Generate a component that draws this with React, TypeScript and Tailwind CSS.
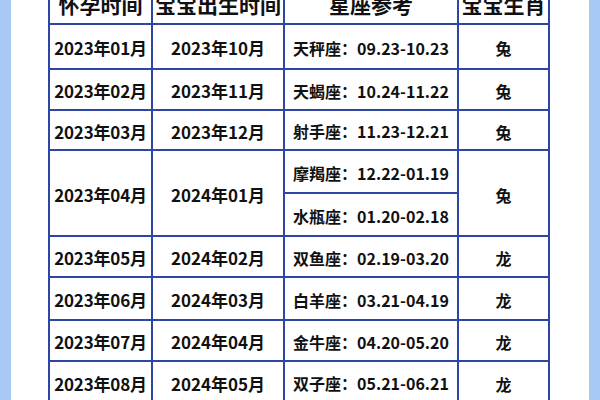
import React from "react";

type Row = { a: string; b: string; signs: string[]; z: string; h: number };

const rows: Row[] = [
  { a: "2023年01月", b: "2023年10月", signs: ["天秤座：09.23-10.23"], z: "兔", h: 45 },
  { a: "2023年02月", b: "2023年11月", signs: ["天蝎座：10.24-11.22"], z: "兔", h: 41 },
  { a: "2023年03月", b: "2023年12月", signs: ["射手座：11.23-12.21"], z: "兔", h: 40 },
  { a: "2023年04月", b: "2024年01月", signs: ["摩羯座：12.22-01.19", "水瓶座：01.20-02.18"], z: "兔", h: 86 },
  { a: "2023年05月", b: "2024年02月", signs: ["双鱼座：02.19-03.20"], z: "龙", h: 41 },
  { a: "2023年06月", b: "2024年03月", signs: ["白羊座：03.21-04.19"], z: "龙", h: 43 },
  { a: "2023年07月", b: "2024年04月", signs: ["金牛座：04.20-05.20"], z: "龙", h: 41 },
  { a: "2023年08月", b: "2024年05月", signs: ["双子座：05.21-06.21"], z: "龙", h: 42 },
];

const cell = "flex items-center justify-center border-r-2 border-b-2 border-[#2d45a3] whitespace-nowrap";

export default function App() {
  return (
    <div
      className="w-[600px] h-[400px] bg-[#a7c9f3] px-[11px] overflow-hidden"
      style={{ fontFamily: '"Noto Sans CJK SC", "Noto Sans", sans-serif' }}
    >
      <div className="w-full h-full bg-white overflow-hidden">
        <div className="ml-[37px] mt-[-16px] w-[502px] border-l-2 border-t-2 border-[#2d45a3] text-[#111] font-bold">
          <div className="flex h-[39px] text-[21px]">
            <div className={`${cell} w-[103px]`}>怀孕时间</div>
            <div className={`${cell} w-[132px]`}>宝宝出生时间</div>
            <div className={`${cell} w-[174px]`}>星座参考</div>
            <div className={`${cell} w-[91px]`}>宝宝生肖</div>
          </div>
          {rows.map((r, i) => (
            <div key={i} className="flex" style={{ height: r.h }}>
              <div className={`${cell} w-[103px] pt-[3px] text-[17px] tracking-[-0.2px]`}>{r.a}</div>
              <div className={`${cell} w-[132px] pt-[3px] text-[17px]`}>{r.b}</div>
              <div className="w-[174px] flex flex-col text-[16px]">
                {r.signs.map((s, j) => (
                  <div key={j} className={`${cell} flex-1 pt-[2px]`}>
                    {s}
                  </div>
                ))}
              </div>
              <div className={`${cell} w-[91px] pt-[3px] text-[16px]`}>{r.z}</div>
            </div>
          ))}
        </div>
      </div>
    </div>
  );
}
